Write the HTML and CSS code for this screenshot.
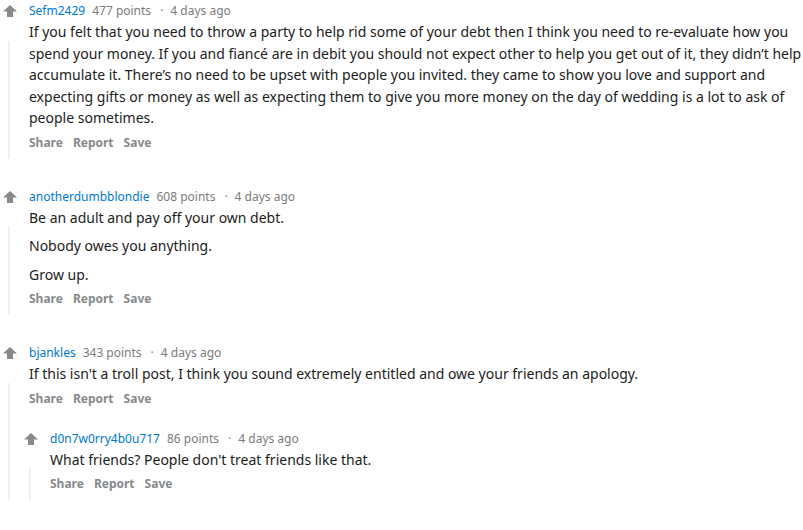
FILE: index.html
```html
<!DOCTYPE html>
<html lang="en">
<head>
    <meta charset="UTF-8">
    <title>Comments</title>
    <link rel="stylesheet" href="styles.css">
</head>
<body>
    <div class="comments">
        <div class="comment">
            <div class="gutter">
                <svg class="upvote" viewBox="0 0 14 12"><path d="M7 0 L14 6.5 H10 V12 H4 V6.5 H0 Z"/></svg>
                <div class="thread"></div>
            </div>
            <div class="content">
                <div class="meta"><a class="author">Sefm2429</a><span>477 points</span><span class="dot">·</span><span>4 days ago</span></div>
                <div class="body">
                    <p>If you felt that you need to throw a party to help rid some of your debt then I think you need to re-evaluate how you spend your money. If you and fiancé are in debit you should not expect other to help you get out of it, they didn’t help accumulate it. There’s no need to be upset with people you invited. they came to show you love and support and expecting gifts or money as well as expecting them to give you more money on the day of wedding is a lot to ask of people sometimes.</p>
                </div>
                <div class="actions"><span>Share</span><span>Report</span><span>Save</span></div>
            </div>
        </div>

        <div class="comment">
            <div class="gutter">
                <svg class="upvote" viewBox="0 0 14 12"><path d="M7 0 L14 6.5 H10 V12 H4 V6.5 H0 Z"/></svg>
                <div class="thread"></div>
            </div>
            <div class="content">
                <div class="meta"><a class="author">anotherdumbblondie</a><span>608 points</span><span class="dot">·</span><span>4 days ago</span></div>
                <div class="body">
                    <p>Be an adult and pay off your own debt.</p>
                    <p>Nobody owes you anything.</p>
                    <p>Grow up.</p>
                </div>
                <div class="actions"><span>Share</span><span>Report</span><span>Save</span></div>
            </div>
        </div>

        <div class="comment">
            <div class="gutter">
                <svg class="upvote" viewBox="0 0 14 12"><path d="M7 0 L14 6.5 H10 V12 H4 V6.5 H0 Z"/></svg>
                <div class="thread"></div>
            </div>
            <div class="content">
                <div class="meta"><a class="author">bjankles</a><span>343 points</span><span class="dot">·</span><span>4 days ago</span></div>
                <div class="body">
                    <p>If this isn't a troll post, I think you sound extremely entitled and owe your friends an apology.</p>
                </div>
                <div class="actions"><span>Share</span><span>Report</span><span>Save</span></div>

                <div class="comment reply">
                    <div class="gutter">
                        <svg class="upvote" viewBox="0 0 14 12"><path d="M7 0 L14 6.5 H10 V12 H4 V6.5 H0 Z"/></svg>
                        <div class="thread"></div>
                    </div>
                    <div class="content">
                        <div class="meta"><a class="author">d0n7w0rry4b0u717</a><span>86 points</span><span class="dot">·</span><span>4 days ago</span></div>
                        <div class="body">
                            <p>What friends? People don't treat friends like that.</p>
                        </div>
                        <div class="actions"><span>Share</span><span>Report</span><span>Save</span></div>
                    </div>
                </div>
            </div>
        </div>
    </div>
</body>
</html>
```

FILE: styles.css
```css
body{
    margin: 0;
    background-color: #ffffff;
    font-family: "Noto Sans", Arial, sans-serif;
    color: #1c1c1c;
}
.comments{
    padding: 3px 0 0 3px;
}
.comment{
    display: flex;
    margin-bottom: 34px;
}
.comment.reply{
    margin: 20px 0 0 -5px;
}
.gutter{
    width: 26px;
    flex-shrink: 0;
    display: flex;
    flex-direction: column;
    align-items: flex-start;
}
.upvote{
    width: 14px;
    height: 12px;
    margin-top: 2px;
    fill: #878a8c;
}
.thread{
    flex: 1;
    width: 2px;
    margin: 24px 0 -4px 5px;
    background-color: #edeff1;
}
.content{
    flex: 1;
}
.meta{
    font-size: 12px;
    line-height: 16px;
    color: #7c7c7c;
}
.meta span{
    margin-left: 7px;
}
.meta .dot{
    margin-left: 9px;
}
.author{
    color: #0079d3;
}
.body{
    font-size: 14px;
    line-height: 21.5px;
    margin-top: 2px;
}
.body p{
    margin: 0;
}
.body p + p{
    margin-top: 7px;
}
.actions{
    font-size: 12px;
    font-weight: bold;
    line-height: 24px;
    margin-top: 2px;
    color: #878a8c;
}
.actions span{
    margin-right: 10px;
}
```
